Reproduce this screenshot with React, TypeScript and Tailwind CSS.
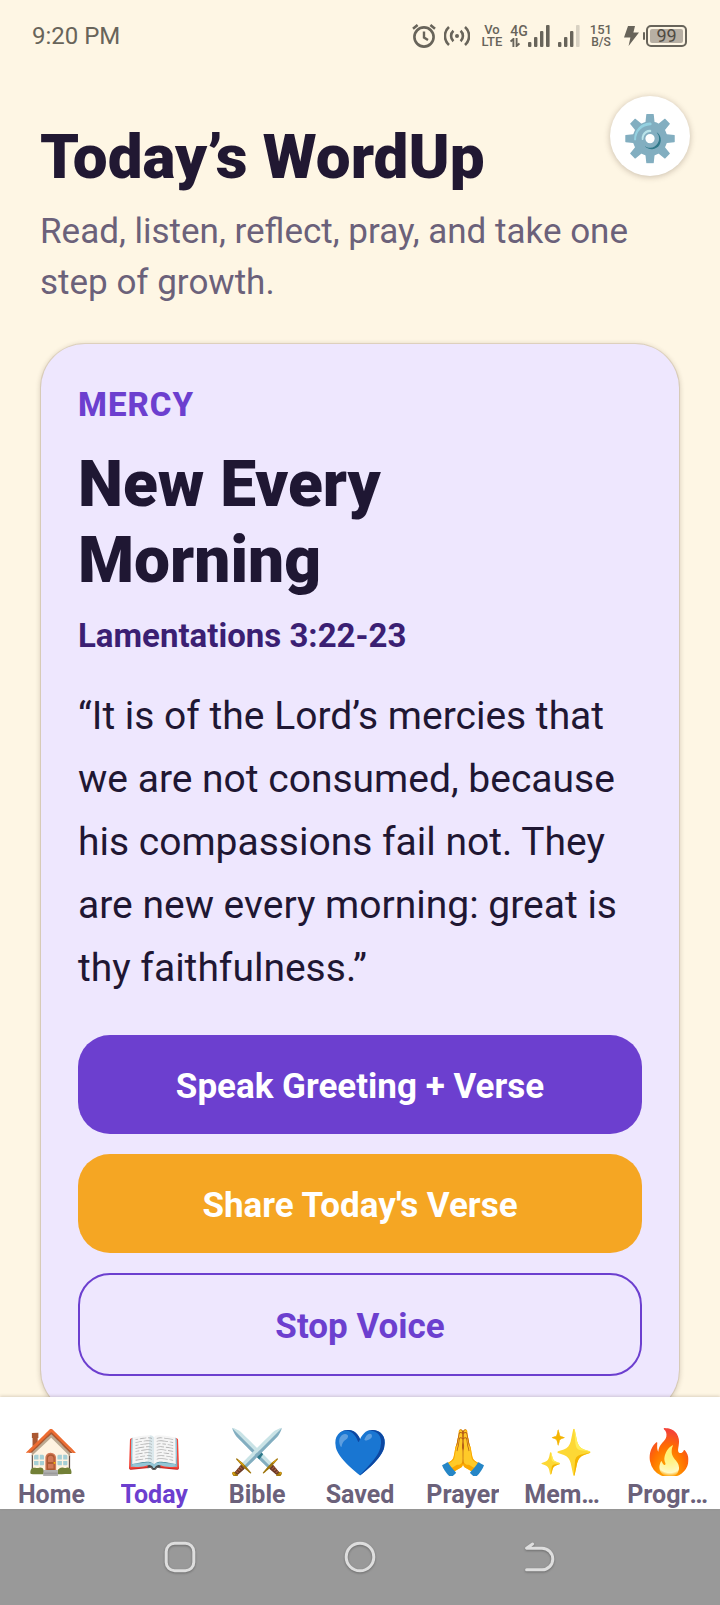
import React from "react";

type Tab = { icon: string; label: string; active?: boolean };

const tabs: Tab[] = [
  { icon: "🏠", label: "Home" },
  { icon: "📖", label: "Today", active: true },
  { icon: "⚔️", label: "Bible" },
  { icon: "💙", label: "Saved" },
  { icon: "🙏", label: "Prayer" },
  { icon: "✨", label: "Memory" },
  { icon: "🔥", label: "Progress" },
];

function AlarmIcon() {
  return (
    <svg width="24" height="24" viewBox="0 0 24 24" fill="none" stroke="currentColor" aria-hidden="true">
      <circle cx="12" cy="13" r="9.6" strokeWidth="2.6" />
      <path d="M12 7.5v6l4 2.6" strokeWidth="2.4" />
      <path d="M1 4.8 5.6 1M23 4.8 18.4 1" strokeWidth="2.6" />
    </svg>
  );
}

function HotspotIcon() {
  return (
    <svg width="26" height="20" viewBox="0 0 26 20" fill="none" stroke="currentColor" strokeWidth="2.6" aria-hidden="true">
      <circle cx="13" cy="10" r="2" fill="currentColor" stroke="none" />
      <path d="M9.4 4.8a7 7 0 0 0 0 10.4M16.6 4.8a7 7 0 0 1 0 10.4" />
      <path d="M5 1a12 12 0 0 0 0 18M21 1a12 12 0 0 1 0 18" />
    </svg>
  );
}

function DataArrowsIcon() {
  return (
    <svg width="10" height="9" viewBox="0 0 10 9" fill="none" stroke="currentColor" strokeWidth="1.9" aria-hidden="true">
      <path d="M3.4 9V1L.6 3.6M6.6 0v8l2.8-2.6" />
    </svg>
  );
}

function SignalIcon({ weak = false }: { weak?: boolean }) {
  return (
    <svg width="22" height="22" viewBox="0 0 22 22" fill="currentColor" aria-hidden="true">
      <rect x="0" y="17" width="3.4" height="5" rx="1" />
      <rect x="6" y="12" width="3.4" height="10" rx="1" />
      <rect x="12" y="6" width="3.4" height="16" rx="1" />
      <rect x="18" y="0" width="3.6" height="22" rx="1" opacity={weak ? 0.25 : 1} />
    </svg>
  );
}

function BoltIcon() {
  return (
    <svg width="15" height="20" viewBox="0 0 15 20" fill="currentColor" aria-hidden="true">
      <path d="M4 0h7L9.4 6.6H15L4.6 20l1.8-8.6H0z" />
    </svg>
  );
}

function StatusBar() {
  return (
    <div className="flex h-[72px] shrink-0 items-center justify-between pr-[33px] pl-8 text-[#68645a]">
      <span className="text-[24px]">9:20 PM</span>
      <div className="flex items-center font-medium">
        <AlarmIcon />
        <span className="ml-2">
          <HotspotIcon />
        </span>
        <span className="ml-3 flex flex-col items-center text-[13px] leading-[12px]">
          <span>Vo</span>
          <span>LTE</span>
        </span>
        <span className="ml-2 flex flex-col text-[14px] leading-[13px]">
          <span>4G</span>
          <DataArrowsIcon />
        </span>
        <SignalIcon />
        <span className="ml-2">
          <SignalIcon weak />
        </span>
        <span className="ml-2.5 flex flex-col items-center leading-[13px]">
          <span className="text-[13px]">151</span>
          <span className="text-[12px]">B/S</span>
        </span>
        <span className="ml-3">
          <BoltIcon />
        </span>
        <span className="ml-1 h-2 w-[2px] rounded-sm bg-current" />
        <span className="ml-px flex h-[22px] w-[41px] rounded-[5px] border-2 border-current p-[2px]">
          <span className="flex flex-1 items-center justify-center rounded-[2px] bg-[#b7afa3] text-[18px] leading-none font-normal text-[#4f4b43]">
            99
          </span>
        </span>
      </div>
    </div>
  );
}

function TodayCard() {
  const action = "rounded-[32px] pt-[30px] pb-[26px]";
  return (
    <article className="mx-px mt-9 rounded-[44px] bg-[#eee7fe] px-[37px] py-[38px] text-[#1f1733] shadow-[0_0_0_1px_rgba(120,90,60,0.14),0_1px_5px_1px_rgba(60,40,20,0.2)]">
      <p className="text-[33px] leading-[46px] font-extrabold tracking-[1px] text-[#6c3fcf]">MERCY</p>
      <h2 className="mt-[19px] pr-5 text-[64px] leading-[76px] font-black">New Every Morning</h2>
      <p className="mt-[17px] text-[33px] leading-[39px] font-bold text-[#3b1f73]">Lamentations 3:22-23</p>
      <p className="mt-[30px] text-[39px] leading-[63px]">
        “It is of the Lord’s mercies that we are not consumed, because his compassions fail not. They are new every
        morning: great is thy faithfulness.”
      </p>
      <div className="mt-[35px] flex flex-col gap-5 text-[35px] leading-[43px] font-bold">
        <button type="button" className={`${action} bg-[#6c3fcf] text-white`}>
          Speak Greeting + Verse
        </button>
        <button type="button" className={`${action} bg-[#f5a623] text-white`}>
          Share Today's Verse
        </button>
        <button type="button" className={`${action} border-2 border-[#6c3fcf] text-[#6c3fcf]`}>
          Stop Voice
        </button>
      </div>
    </article>
  );
}

function TabBar() {
  return (
    <nav className="relative flex shrink-0 bg-white pt-[30px] shadow-[0_-1px_3px_rgba(60,40,20,0.18)]">
      {tabs.map((tab) => (
        <a
          key={tab.label}
          href="#"
          aria-current={tab.active ? "page" : undefined}
          className={
            tab.active
              ? "flex min-w-0 flex-1 flex-col items-center px-2.5 text-[#6c3fcf]"
              : "flex min-w-0 flex-1 flex-col items-center px-2.5 text-[#6b617a]"
          }
        >
          <span className="h-[49px] overflow-hidden text-[45px] leading-[52px]">{tab.icon}</span>
          <span className="mt-1 max-w-full truncate text-[25px] leading-[29px] font-bold">{tab.label}</span>
        </a>
      ))}
    </nav>
  );
}

function SystemBar() {
  const glyph = "drop-shadow-[0_1px_1px_rgba(0,0,0,0.3)]";
  const key = "flex flex-1 items-center justify-center";
  return (
    <div className="flex h-24 shrink-0 bg-[#999999] px-[12.5%] text-[#dedede]">
      <button type="button" aria-label="Recent apps" className={key}>
        <svg width="32" height="32" viewBox="0 0 32 32" fill="none" stroke="currentColor" strokeWidth="3" className={glyph}>
          <rect x="2.2" y="2.2" width="27.6" height="27.6" rx="8.5" />
        </svg>
      </button>
      <button type="button" aria-label="Home screen" className={key}>
        <svg width="32" height="32" viewBox="0 0 32 32" fill="none" stroke="currentColor" strokeWidth="3" className={glyph}>
          <circle cx="16" cy="16" r="13.8" />
        </svg>
      </button>
      <button type="button" aria-label="Back" className={key}>
        <svg
          width="32"
          height="32"
          viewBox="0 0 32 32"
          fill="none"
          stroke="currentColor"
          strokeWidth="3"
          strokeLinecap="round"
          strokeLinejoin="round"
          className={glyph}
        >
          <path d="M8.6 3 2.6 7.2H18a10.8 10.8 0 0 1 0 21.6H2.6" />
        </svg>
      </button>
    </div>
  );
}

export default function App() {
  return (
    <div className="flex h-screen flex-col overflow-hidden bg-[#fef6e4] font-['Roboto',sans-serif]">
      <StatusBar />
      <main className="relative min-h-0 flex-1 overflow-hidden px-10 pt-12">
        <header>
          <h1 className="text-[62px] leading-[74px] font-black text-[#211832]">Today’s WordUp</h1>
          <p className="mt-3 text-[35px] leading-[51px] text-[#6b617a]">
            Read, listen, reflect, pray, and take one step of growth.
          </p>
        </header>
        <button
          type="button"
          aria-label="Settings"
          className="absolute top-6 right-[30px] flex size-20 items-center justify-center rounded-full bg-white pt-1 text-[45px] leading-none shadow-[0_1px_6px_rgba(60,40,20,0.28)]"
        >
          ⚙️
        </button>
        <TodayCard />
      </main>
      <TabBar />
      <SystemBar />
    </div>
  );
}
